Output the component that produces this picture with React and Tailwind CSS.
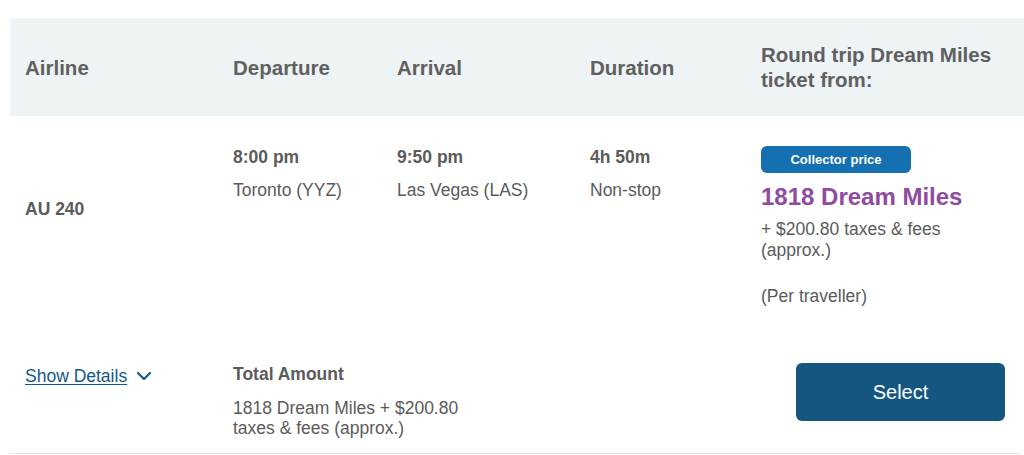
import React from 'react';

const cols = 'grid grid-cols-[208px_164px_193px_171px_1fr]';

export default function App() {
  return (
    <div className="min-h-[455px] bg-white font-['Liberation_Sans',Arial,sans-serif] text-[#5b5b5b]">
      <div className="ml-[10px] pt-[18px]">
        {/* Header */}
        <div className={`${cols} h-[98px] items-center bg-[#eef3f6] pl-[15px] text-[20.5px] font-bold leading-[25px] text-[#606060]`}>
          <div>Airline</div>
          <div>Departure</div>
          <div>Arrival</div>
          <div>Duration</div>
          <div className="pr-4">
            Round trip Dream Miles
            <br />
            ticket from:
          </div>
        </div>

        {/* Flight row */}
        <div className={`${cols} pl-[15px] pt-[31px] text-[17.5px] leading-[20px]`}>
          <div className="mt-[52px] font-bold">AU 240</div>
          <div>
            <div className="font-bold">8:00 pm</div>
            <div className="mt-[13px]">Toronto (YYZ)</div>
          </div>
          <div>
            <div className="font-bold">9:50 pm</div>
            <div className="mt-[13px]">Las Vegas (LAS)</div>
          </div>
          <div>
            <div className="font-bold">4h 50m</div>
            <div className="mt-[13px]">Non-stop</div>
          </div>
          <div>
            <span className="-mt-px inline-flex h-[27px] w-[150px] items-center justify-center rounded-[6px] bg-[#1470b0] text-[13px] font-bold text-white">
              Collector price
            </span>
            <div className="mt-[10px] text-[24px] font-bold leading-[28px] text-[#8e4b9f]">1818 Dream Miles</div>
            <div className="mt-[8px] leading-[21px]">
              + $200.80 taxes &amp; fees
              <br />
              (approx.)
            </div>
            <div className="mt-[25px] leading-[21px]">(Per traveller)</div>
          </div>
        </div>

        {/* Footer row */}
        <div className={`${cols} mr-[4px] mt-[56px] border-b border-[#dde7eb] pb-[15px] pl-[15px] text-[17.5px] leading-[20px]`}>
          <div className="pt-[3px]">
            <a href="#" className="inline-flex items-center gap-[9px] text-[#11598b]">
              <span className="underline underline-offset-2">Show Details</span>
              <svg width="16" height="10" viewBox="0 0 16 10" fill="none" stroke="currentColor" strokeWidth="2.2" strokeLinecap="round" strokeLinejoin="round">
                <path d="M2 2l6 6 6-6" />
              </svg>
            </a>
          </div>
          <div className="col-span-3 w-[240px] pt-px">
            <div className="font-bold">Total Amount</div>
            <div className="mt-[14px]">1818 Dream Miles + $200.80 taxes &amp; fees (approx.)</div>
          </div>
          <div className="flex justify-end pr-[15px]">
            <button className="h-[58px] w-[209px] rounded-[6px] bg-[#155681] text-[20px] text-white">Select</button>
          </div>
        </div>
      </div>
    </div>
  );
}
